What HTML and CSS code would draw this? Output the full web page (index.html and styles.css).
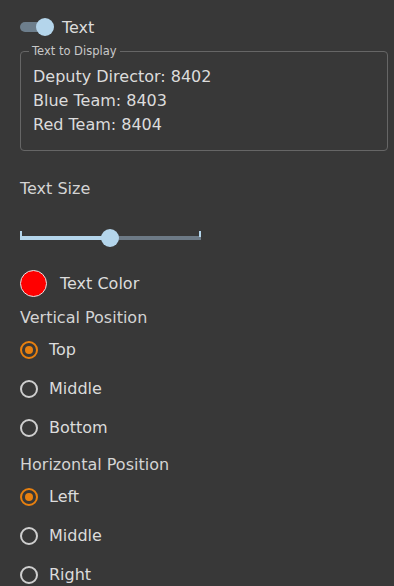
FILE: index.html
```html
<!DOCTYPE html>
<html lang="en">
<head>
    <meta charset="UTF-8">
    <meta name="viewport" content="width=device-width, initial-scale=1.0">
    <title>Text Overlay</title>
    <link rel="stylesheet" href="styles.css">
</head>
<body>

    <div class="panel">
        <label class="toggle-row">
            <span class="toggle"><span class="toggle-thumb"></span></span>
            <span>Text</span>
        </label>

        <fieldset class="text-box">
            <legend>Text to Display</legend>
            <div class="text-lines">
                <div>Deputy Director: 8402</div>
                <div>Blue Team: 8403</div>
                <div>Red Team: 8404</div>
            </div>
        </fieldset>

        <div class="section-label size-label">Text Size</div>

        <div class="slider">
            <div class="slider-fill"></div>
            <div class="slider-thumb"></div>
        </div>

        <div class="color-row">
            <span class="swatch"></span>
            <span>Text Color</span>
        </div>

        <div class="section-label">Vertical Position</div>
        <div class="radio-group">
            <div class="radio-row checked"><span class="radio"></span>Top</div>
            <div class="radio-row"><span class="radio"></span>Middle</div>
            <div class="radio-row"><span class="radio"></span>Bottom</div>
        </div>

        <div class="section-label">Horizontal Position</div>
        <div class="radio-group">
            <div class="radio-row checked"><span class="radio"></span>Left</div>
            <div class="radio-row"><span class="radio"></span>Middle</div>
            <div class="radio-row"><span class="radio"></span>Right</div>
        </div>
    </div>

</body>
</html>
```

FILE: styles.css
```css
body {
    margin: 0;
    background-color: #383838;
    font-family: 'DejaVu Sans', sans-serif;
    color: #dcdcdc;
    font-size: 16px;
}

.panel {
    padding: 17px 6px 0 20px;
    display: flex;
    flex-direction: column;
}

.toggle-row {
    display: flex;
    align-items: center;
    height: 20px;
    gap: 12px;
}

.toggle {
    position: relative;
    width: 30px;
    height: 10px;
    border-radius: 5px;
    background-color: #6d7e8c;
}

.toggle-thumb {
    position: absolute;
    right: -4px;
    top: -4px;
    width: 18px;
    height: 18px;
    border-radius: 50%;
    background-color: #b4d5eb;
}

.text-box {
    margin: 7px 0 0 0;
    border: 1px solid #666;
    border-radius: 4px;
    padding: 0 12px 16px 12px;
    height: 107px;
    box-sizing: border-box;
}

.text-box legend {
    font-size: 11.5px;
    color: #c8c8c8;
    padding: 0 3px;
    margin-left: -4px;
    line-height: 14px;
}

.text-lines {
    line-height: 24px;
    margin-top: 7px;
}

.section-label {
    height: 24px;
    line-height: 24px;
    color: #d4d4d4;
}

.size-label {
    margin-top: 26px;
}

.slider {
    position: relative;
    width: 181px;
    height: 4px;
    margin-top: 35px;
    background-color: #6d7a86;
    border-left: 2px solid #b4d5eb;
    border-right: 2px solid #6d7a86;
    box-sizing: border-box;
}

.slider::before,
.slider::after {
    content: "";
    position: absolute;
    top: -5px;
    width: 2px;
    height: 6px;
    background-color: #b4d5eb;
}

.slider::before {
    left: -2px;
}

.slider::after {
    right: -2px;
}

.slider-fill {
    width: 88px;
    height: 100%;
    background-color: #b4d5eb;
}

.slider-thumb {
    position: absolute;
    left: 79px;
    top: -7px;
    width: 18px;
    height: 18px;
    border-radius: 50%;
    background-color: #b4d5eb;
}

.color-row {
    display: flex;
    align-items: center;
    gap: 13px;
    margin-top: 29px;
    height: 28px;
}

.swatch {
    width: 25px;
    height: 25px;
    border-radius: 50%;
    background-color: #ff0000;
    border: 1px solid #e6e6e6;
}

.color-row + .section-label {
    margin-top: 9px;
}

.radio-group {
    display: flex;
    flex-direction: column;
}

.radio-group + .section-label {
    margin-top: 6px;
}

.radio-row {
    display: flex;
    align-items: center;
    gap: 11px;
    height: 39px;
}

.radio {
    width: 14px;
    height: 14px;
    border-radius: 50%;
    border: 2px solid #cfcfcf;
    position: relative;
}

.radio-row.checked .radio {
    border-color: #e8800f;
}

.radio-row.checked .radio::after {
    content: "";
    position: absolute;
    left: 3px;
    top: 3px;
    width: 8px;
    height: 8px;
    border-radius: 50%;
    background-color: #e8800f;
}
```
